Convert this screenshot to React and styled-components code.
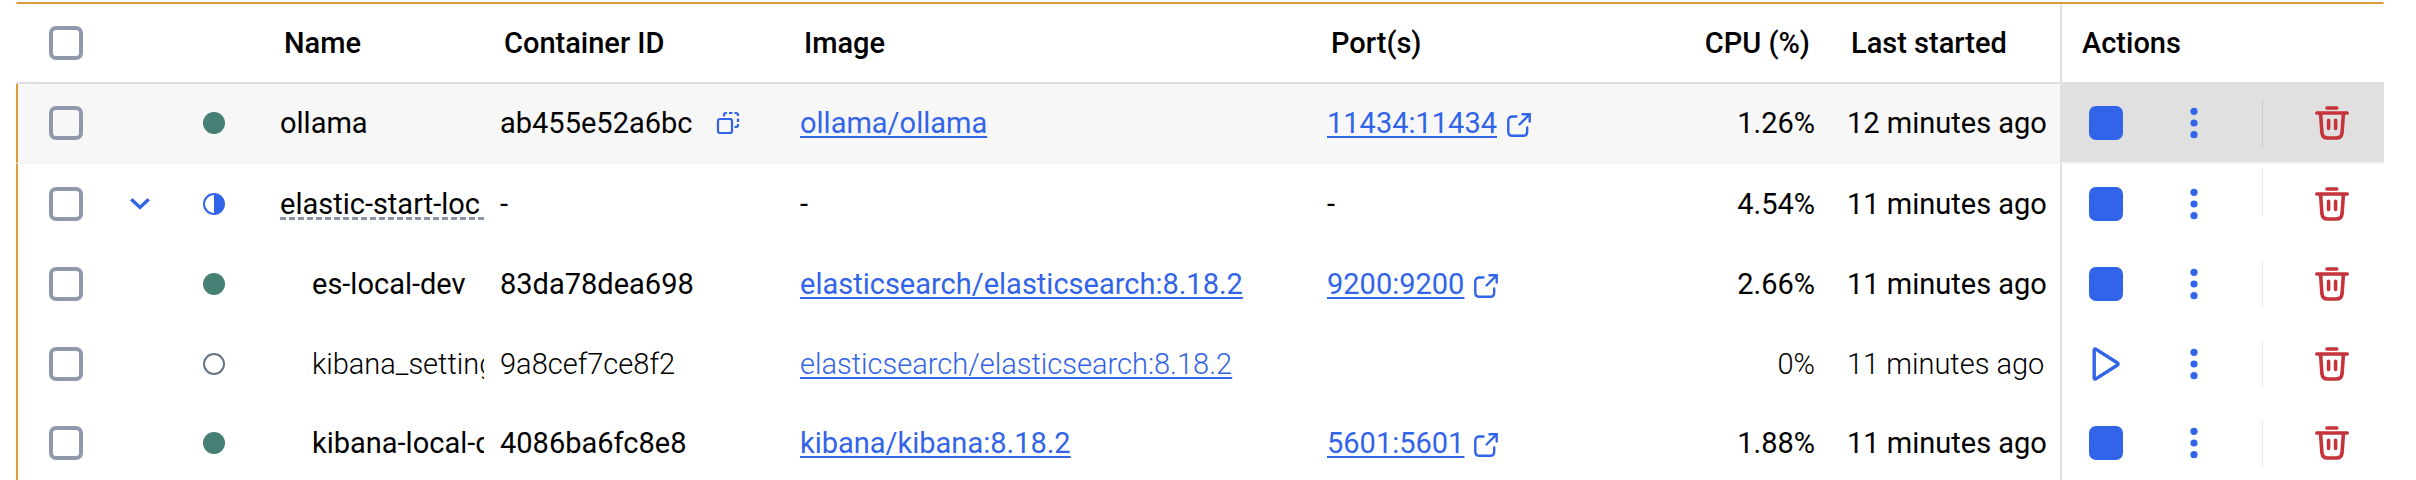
import React from "react";
import styled, { createGlobalStyle, css } from "styled-components";

const Global = createGlobalStyle`
  * { box-sizing: border-box; }
  body { margin: 0; background: #fff; color: #000; font-family: Roboto, "Liberation Sans", sans-serif; }
`;

const BLUE = "#3164e8";
const RED = "#c6343b";

const Pane = styled.main`
  height: 100vh;
  overflow: hidden;
  padding: 2px 32px 0 16px;
`;

const Frame = styled.div`
  border-top: 2px solid #dc9a38;
  border-radius: 2px;
`;

const Table = styled.table`
  width: 100%;
  table-layout: fixed;
  border-collapse: separate;
  border-spacing: 0;
  font-size: 29px;
  line-height: 36px;
`;

const Col = styled.col`
  width: ${(p) => (p.$w ? `${p.$w}px` : "auto")};
`;

const cellBase = css`
  height: 80px;
  padding: 0 8px;
  text-align: left;
  vertical-align: middle;
  white-space: nowrap;
`;

const HeadCell = styled.th`
  ${cellBase}
  padding: 0 12px;
  font-weight: 500;
  border-bottom: 2px solid #e0e0e0;
  ${(p) => p.$end && "text-align: right; padding-right: 29px;"}
  ${(p) => p.$actions && "border-left: 2px solid #e0e0e0; padding-left: 20px;"}
  ${(p) => p.$check && "padding-left: 33px;"}
`;

const Row = styled.tr`
  background: ${(p) => (p.$active ? "#f7f7f7" : "#fff")};
  font-weight: ${(p) => (p.$stopped ? 300 : 400)};
`;

const Cell = styled.td`
  ${cellBase}
  border-bottom: ${(p) => (p.$active ? "2px solid #f4f4f4" : "0")};
  ${(p) => p.$center && "padding: 0; text-align: center;"}
  ${(p) => p.$end && "text-align: right; padding-right: 24px;"}

  tr:last-child > & {
    border-bottom: 2px solid #e0e0e0;
  }
`;

const CheckCell = styled(Cell)`
  padding-left: 31px;
  border-left: 2px solid #dc9a38;
`;

const ActionCell = styled(Cell)`
  padding: 0;
  border-left: 2px solid #e0e0e0;
  background: ${(p) => (p.$active ? "#e0e0e0" : "transparent")};
`;

const Checkbox = styled.input.attrs({ type: "checkbox" })`
  appearance: none;
  display: block;
  width: 34px;
  height: 34px;
  margin: 0;
  border: 4px solid #9099ab;
  border-radius: 7px;
`;

const IconButton = styled.button`
  display: flex;
  align-items: center;
  justify-content: center;
  flex: none;
  width: ${(p) => p.$size || 34}px;
  height: ${(p) => p.$size || 34}px;
  padding: 0;
  border: 0;
  background: none;
  color: ${(p) => (p.$danger ? RED : BLUE)};
  cursor: pointer;
`;

const Icon = styled.svg`
  display: block;
  flex: none;
  fill: none;
  stroke: currentColor;
  stroke-linecap: round;
  stroke-linejoin: round;
`;

const StatusIcon = styled(Icon)`
  margin: 0 auto;
`;

const NameText = styled.div`
  overflow: hidden;
  padding-left: ${(p) => (p.$child ? 32 : 0)}px;
`;

const GroupName = styled.span`
  display: block;
  overflow: hidden;
  height: 32px;
  line-height: 32px;
  border-bottom: 3px dashed #8b94a7;
`;

const Inline = styled.div`
  display: flex;
  align-items: center;
  gap: ${(p) => p.$gap}px;
`;

const Link = styled.a`
  color: ${BLUE};
  text-decoration: underline;
  text-decoration-thickness: 2px;
  text-underline-offset: 3px;
`;

const Actions = styled.div`
  display: flex;
  align-items: center;
  height: 72px;
  padding: 0 35px 0 27px;
`;

const MoreButton = styled(IconButton)`
  margin-left: 54px;
`;

const Divider = styled.span`
  width: 2px;
  height: 48px;
  margin: 0 52px 0 51px;
  align-self: ${(p) => (p.$top ? "flex-start" : "center")};
  background: ${(p) => (p.$active ? "#cecece" : "#ebebeb")};
`;

const Status = ({ state }) => (
  <StatusIcon width="22" height="22" viewBox="0 0 22 22" role="img" aria-label={state}>
    {state === "running" && <circle cx="11" cy="11" r="11" fill="#467f74" stroke="none" />}
    {state === "stopped" && <circle cx="11" cy="11" r="10" stroke="#677285" strokeWidth="2" />}
    {state === "partial" && (
      <>
        <circle cx="11" cy="11" r="10" stroke={BLUE} strokeWidth="2" />
        <path d="M11 1.500a9.500 9.500 0 0 1 0 19z" fill={BLUE} stroke="none" />
      </>
    )}
  </StatusIcon>
);

const Toggle = styled(IconButton)`
  margin: 0 auto;
`;

const Chevron = () => (
  <Icon width="20" height="14" viewBox="0 0 20 14" strokeWidth="3.400">
    <path d="M1.300 2.200 10 10.400 18.700 2.200" strokeLinecap="butt" strokeLinejoin="miter" />
  </Icon>
);

const Copy = () => (
  <Icon width="24" height="24" viewBox="0 0 24 24" strokeWidth="2.200">
    <rect x="2" y="8" width="14" height="14" rx="2" />
    <path
      d="M8 5.500V4Q8 2 10 2H11M13 2H16.500M18.500 2H20Q22 2 22 4V5M22 7.500V11M22 13V14Q22 16 20 16H18.500"
      strokeLinecap="butt"
    />
  </Icon>
);

const External = () => (
  <Icon width="24" height="28" viewBox="0 -4 24 28" strokeWidth="2.400">
    <path d="M9.500 3.500H5.500Q1.300 3.500 1.300 7.500V18.800Q1.300 22.800 5.500 22.800H16Q20.200 22.800 20.200 18.800V14.500" />
    <path d="M12.500 11.500 22 2M15.500 1.300H22.700V8.500" strokeLinejoin="miter" />
  </Icon>
);

const Stop = () => (
  <Icon width="34" height="34" viewBox="0 0 34 34">
    <rect width="34" height="34" rx="7" fill="currentColor" stroke="none" />
  </Icon>
);

const Play = () => (
  <Icon width="34" height="34" viewBox="0 0 34 34" strokeWidth="3.400">
    <path d="M5.200 3.500V30.500Q5.200 33 7.200 31.600L28.200 18.300Q30 17 28.200 15.700L7.200 2.400Q5.200 1 5.200 3.500Z" />
  </Icon>
);

const More = () => (
  <Icon width="34" height="34" viewBox="0 0 34 34">
    <g fill="currentColor" stroke="none">
      <circle cx="17" cy="5.300" r="3.600" />
      <circle cx="17" cy="17" r="3.600" />
      <circle cx="17" cy="28.700" r="3.600" />
    </g>
  </Icon>
);

const Trash = () => (
  <Icon width="34" height="34" viewBox="0 0 34 34" strokeWidth="3.600">
    <path d="M12 2H21.800M1.800 7H32.200" />
    <path d="M5.600 7.500 6.900 26.500Q7.400 32 12.500 32H21.500Q26.600 32 27.100 26.500L28.400 7.500" />
    <path d="M13.600 14.300V22.500M20.600 14.300V22.500" />
  </Icon>
);

const rows = [
  { name: "ollama", id: "ab455e52a6bc", image: "ollama/ollama", port: "11434:11434", cpu: "1.26%", started: "12 minutes ago", state: "running", active: true },
  { name: "elastic-start-loc", cpu: "4.54%", started: "11 minutes ago", state: "partial", group: true },
  { name: "es-local-dev", id: "83da78dea698", image: "elasticsearch/elasticsearch:8.18.2", port: "9200:9200", cpu: "2.66%", started: "11 minutes ago", state: "running", child: true },
  { name: "kibana_settings", id: "9a8cef7ce8f2", image: "elasticsearch/elasticsearch:8.18.2", cpu: "0%", started: "11 minutes ago", state: "stopped", child: true },
  { name: "kibana-local-dev", id: "4086ba6fc8e8", image: "kibana/kibana:8.18.2", port: "5601:5601", cpu: "1.88%", started: "11 minutes ago", state: "running", child: true },
];

const ContainerRow = ({ row }) => {
  const { active, group, state } = row;
  const stopped = state === "stopped";
  return (
    <Row $active={active} $stopped={stopped}>
      <CheckCell $active={active}>
        <Checkbox aria-label={`Select ${row.name}`} />
      </CheckCell>
      <Cell $active={active} $center>
        {group && (
          <Toggle $size={32} aria-label="Collapse group">
            <Chevron />
          </Toggle>
        )}
      </Cell>
      <Cell $active={active} $center>
        <Status state={state} />
      </Cell>
      <Cell $active={active}>
        {group ? <GroupName>{row.name}</GroupName> : <NameText $child={row.child}>{row.name}</NameText>}
      </Cell>
      <Cell $active={active}>
        <Inline $gap={24}>
          {row.id || "-"}
          {active && (
            <IconButton $size={24} aria-label="Copy container ID">
              <Copy />
            </IconButton>
          )}
        </Inline>
      </Cell>
      <Cell $active={active}>{row.image ? <Link href="#image">{row.image}</Link> : "-"}</Cell>
      <Cell $active={active}>
        {row.port && (
          <Inline $gap={10}>
            <Link href="#port">{row.port}</Link>
            <IconButton $size={24} aria-label={`Open ${row.port}`}>
              <External />
            </IconButton>
          </Inline>
        )}
        {group && "-"}
      </Cell>
      <Cell $active={active} $end>{row.cpu}</Cell>
      <Cell $active={active}>{row.started}</Cell>
      <ActionCell $active={active}>
        <Actions>
          <IconButton aria-label={stopped ? "Start" : "Stop"}>{stopped ? <Play /> : <Stop />}</IconButton>
          <MoreButton aria-label="More actions">
            <More />
          </MoreButton>
          <Divider $top={group} $active={active} />
          <IconButton $danger aria-label="Delete">
            <Trash />
          </IconButton>
        </Actions>
      </ActionCell>
    </Row>
  );
};

export default function App() {
  return (
    <Pane>
      <Global />
      <Frame>
        <Table>
          <colgroup>
            {[108, 32, 116, 220, 300, 0, 360, 160, 221, 324].map((w, i) => (
              <Col key={i} $w={w} />
            ))}
          </colgroup>
          <thead>
            <tr>
              <HeadCell $check>
                <Checkbox aria-label="Select all containers" />
              </HeadCell>
              <HeadCell />
              <HeadCell />
              <HeadCell>Name</HeadCell>
              <HeadCell>Container ID</HeadCell>
              <HeadCell>Image</HeadCell>
              <HeadCell>Port(s)</HeadCell>
              <HeadCell $end>CPU (%)</HeadCell>
              <HeadCell>Last started</HeadCell>
              <HeadCell $actions>Actions</HeadCell>
            </tr>
          </thead>
          <tbody>
            {rows.map((row) => (
              <ContainerRow key={row.name} row={row} />
            ))}
          </tbody>
        </Table>
      </Frame>
    </Pane>
  );
}
